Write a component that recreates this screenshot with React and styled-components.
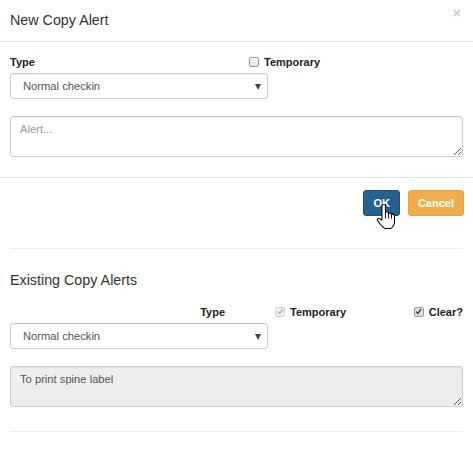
import React from 'react';
import styled, { createGlobalStyle } from 'styled-components';

const Global = createGlobalStyle`
  html, body {
    margin: 0;
    padding: 0;
    background: #fff;
    font-family: "Liberation Sans", Arial, sans-serif;
    color: #333;
  }
`;

const Modal = styled.div`
  width: 473px;
  display: flex;
  flex-direction: column;
`;

const Header = styled.div`
  height: 41px;
  padding: 0 10px;
  display: flex;
  align-items: center;
  justify-content: space-between;
  border-bottom: 1px solid #e5e5e5;
`;

const Title = styled.h4`
  margin: -2px 0 0;
  font-size: 14.3px;
  font-weight: normal;
  line-height: 20px;
  color: #333;
`;

const Close = styled.span`
  font-size: 14px;
  font-weight: bold;
  color: #000;
  opacity: 0.2;
  line-height: 1;
  margin-top: -15px;
  margin-right: 2px;
`;

const Body = styled.div`
  padding: ${p => p.$pad || '13px 10px 0'};
  display: flex;
  flex-direction: column;
`;

const FieldHead = styled.div`
  display: grid;
  grid-template-columns: ${p => p.$cols};
  column-gap: ${p => p.$gap || '0px'};
  align-items: center;
  margin-bottom: 3px;
`;

const Label = styled.span`
  font-size: 11px;
  font-weight: bold;
  line-height: 15px;
  color: #222;
  text-align: ${p => p.$align || 'left'};
`;

const CheckGroup = styled.label`
  display: flex;
  align-items: center;
  gap: 5px;
  justify-self: ${p => p.$justify || 'start'};
`;

const Box = styled.span`
  width: 8px;
  height: 8px;
  border: 1px solid ${p => (p.$disabled ? '#cfcfcf' : '#9a9a9a')};
  border-radius: 2px;
  background: ${p => (p.$disabled ? '#f2f2f2' : p.$checked ? '#dcdcdc' : 'linear-gradient(#f4f4f4, #e4e4e4)')};
  display: flex;
  align-items: center;
  justify-content: center;
  margin-top: -2px;
`;

const SelectWrap = styled.div`
  position: relative;
  width: 258px;

  &::after {
    content: '';
    position: absolute;
    right: 7px;
    top: 11px;
    border-left: 3px solid transparent;
    border-right: 3px solid transparent;
    border-top: 6px solid #444;
  }
`;

const Select = styled.select`
  appearance: none;
  -webkit-appearance: none;
  width: 100%;
  height: 26px;
  box-sizing: border-box;
  border: 1px solid #ccc;
  border-radius: 3px;
  background: #fff;
  padding: 0 0 0 12px;
  font-family: "Liberation Sans", Arial, sans-serif;
  font-size: 11.2px;
  color: #555;
  box-shadow: inset 0 1px 1px rgba(0, 0, 0, 0.075);
  outline: none;
`;

const TextArea = styled.textarea`
  margin-top: 17px;
  width: 453px;
  height: 41px;
  box-sizing: border-box;
  border: 1px solid #ccc;
  border-radius: 3px;
  padding: 5px 9px;
  font-family: "Liberation Sans", Arial, sans-serif;
  font-size: 11.2px;
  line-height: 15px;
  color: #555;
  background: ${p => (p.disabled ? '#eee' : '#fff')};
  box-shadow: inset 0 1px 1px rgba(0, 0, 0, 0.075);
  outline: none;
  display: block;

  &::placeholder {
    color: #999;
  }
`;

const Footer = styled.div`
  margin-top: 20px;
  border-top: 1px solid #e5e5e5;
  padding: 12px 9px 0;
  display: flex;
  justify-content: flex-end;
  gap: 8px;
`;

const ButtonWrap = styled.div`
  position: relative;
`;

const Button = styled.button`
  height: 26px;
  padding: 0 9px;
  border-radius: 3px;
  border: 1px solid ${p => (p.$variant === 'primary' ? '#204d74' : '#eea236')};
  background: ${p => (p.$variant === 'primary' ? '#286090' : '#f0ad4e')};
  color: #fff;
  font-family: "Liberation Sans", Arial, sans-serif;
  font-size: 11px;
  font-weight: bold;
  cursor: pointer;
`;

const Cursor = styled.svg`
  position: absolute;
  left: 13px;
  top: 14px;
  pointer-events: none;
`;

const Rule = styled.hr`
  margin: ${p => p.$margin};
  border: 0;
  border-top: 1px solid #eee;
  width: 453px;
`;

const SectionTitle = styled.h4`
  margin: 21px 0 15px;
  font-size: 14.3px;
  font-weight: normal;
  line-height: 20px;
  color: #333;
`;

function Check({ checked, disabled }) {
  return (
    <Box $checked={checked} $disabled={disabled}>
      {checked && (
        <svg width="7" height="7" viewBox="0 0 7 7">
          <path
            d="M1 3.6 L2.8 5.4 L6 1.2"
            fill="none"
            stroke={disabled ? '#aaa' : '#333'}
            strokeWidth="1.3"
          />
        </svg>
      )}
    </Box>
  );
}

function HandCursor() {
  return (
    <Cursor width="20" height="25" viewBox="0 0 17 21.5">
      <path
        d="M5 1.5 a1.5 1.5 0 0 1 3 0 V8 a1.3 1.3 0 0 1 2.6 0 V9 a1.3 1.3 0 0 1 2.6 0 V10 a1.3 1.3 0 0 1 2.6 0 V15 c0 3 -1.5 4.8 -3 6 H7.2 C5.2 19.5 3 17 1.2 14.2 a1.3 1.3 0 0 1 2 -1.6 L5 14 Z"
        fill="#fff"
        stroke="#000"
        strokeWidth="0.9"
        strokeLinejoin="round"
      />
      <path d="M8 8 V12.5 M10.6 9 V12.5 M13.2 10 V12.5" stroke="#000" strokeWidth="0.8" fill="none" />
    </Cursor>
  );
}

export default function App() {
  return (
    <>
      <Global />
      <Modal>
        <Header>
          <Title>New Copy Alert</Title>
          <Close>×</Close>
        </Header>

        <Body>
          <FieldHead $cols="239px auto">
            <Label>Type</Label>
            <CheckGroup>
              <Check />
              <Label>Temporary</Label>
            </CheckGroup>
          </FieldHead>
          <SelectWrap>
            <Select defaultValue="normal">
              <option value="normal">Normal checkin</option>
            </Select>
          </SelectWrap>
          <TextArea placeholder="Alert..." />
        </Body>

        <Footer>
          <ButtonWrap>
            <Button $variant="primary">OK</Button>
            <HandCursor />
          </ButtonWrap>
          <Button $variant="warning">Cancel</Button>
        </Footer>

        <Body $pad="0 10px">
          <Rule $margin="32px 0 0" />
          <SectionTitle>Existing Copy Alerts</SectionTitle>
          <FieldHead $cols="215px auto 1fr" $gap="50px">
            <Label $align="right">Type</Label>
            <CheckGroup>
              <Check checked disabled />
              <Label>Temporary</Label>
            </CheckGroup>
            <CheckGroup $justify="end">
              <Check checked />
              <Label>Clear?</Label>
            </CheckGroup>
          </FieldHead>
          <SelectWrap>
            <Select defaultValue="normal">
              <option value="normal">Normal checkin</option>
            </Select>
          </SelectWrap>
          <TextArea disabled defaultValue="To print spine label" />
          <Rule $margin="24px 0 0" />
        </Body>
      </Modal>
    </>
  );
}
